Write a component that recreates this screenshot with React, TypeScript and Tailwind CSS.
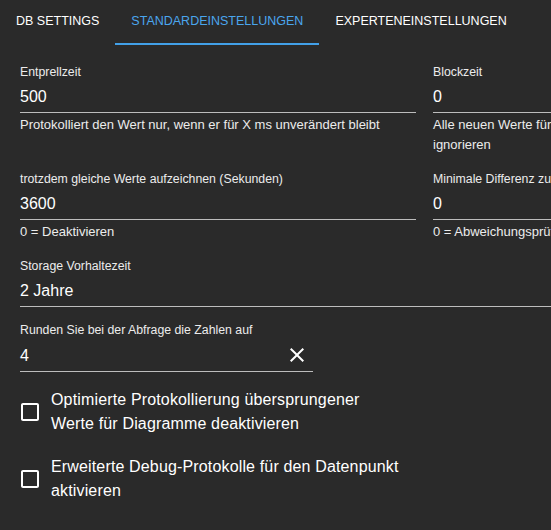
import React from 'react'

interface FieldProps {
  label: string
  value: string
  helper?: string
  className?: string
  endIcon?: React.ReactNode
}

function Field({ label, value, helper, className, endIcon }: FieldProps) {
  return (
    <div className={className}>
      <div className="text-[12.3px] leading-[16px] text-[#ececec] whitespace-nowrap">{label}</div>
      <div className="flex items-center pt-[5px] pb-[4px] border-b border-[#bdbdbd]">
        <span className="flex-1 text-[16px] leading-[23px] text-white whitespace-nowrap">{value}</span>
        {endIcon}
      </div>
      {helper && <div className="mt-[2px] text-[13px] leading-[20px] text-[#ececec]">{helper}</div>}
    </div>
  )
}

function CloseIcon() {
  return (
    <svg viewBox="0 0 24 24" className="w-6 h-6 mr-[4px] fill-white">
      <path d="M19 6.41 17.59 5 12 10.59 6.41 5 5 6.41 10.59 12 5 17.59 6.41 19 12 13.41 17.59 19 19 17.59 13.41 12z" />
    </svg>
  )
}

function CheckRow({ text }: { text: string }) {
  return (
    <label className="flex items-center -ml-[11px]">
      <span className="p-[9px]">
        <svg viewBox="0 0 24 24" className="w-6 h-6 fill-white">
          <path d="M19 5v14H5V5h14m0-2H5c-1.1 0-2 .9-2 2v14c0 1.1.9 2 2 2h14c1.1 0 2-.9 2-2V5c0-1.1-.9-2-2-2z" />
        </svg>
      </span>
      <span className="max-w-[354px] text-[16px] leading-[24px] tracking-[0.15px] text-white">{text}</span>
    </label>
  )
}

const tabs = ['DB SETTINGS', 'STANDARDEINSTELLUNGEN', 'EXPERTENEINSTELLUNGEN']

export default function App() {
  return (
    <div className="w-[551px] h-[530px] overflow-hidden bg-[#2a2a2a] font-['Liberation_Sans',Arial,sans-serif]">
      {/* Tabs */}
      <div className="flex h-[45px]">
        {tabs.map((t, i) => (
          <div
            key={t}
            className={
              i === 1
                ? 'flex items-center px-4 pb-[1px] border-b-2 border-[#42a0e8] text-[12.5px] text-[#4aa6ee] whitespace-nowrap'
                : 'flex items-center px-4 pb-[1px] border-b-2 border-transparent text-[12.5px] text-white whitespace-nowrap'
            }
          >
            {t}
          </div>
        ))}
      </div>

      {/* Settings form */}
      <div className="pl-5 pt-[19px]">
        <div className="grid grid-cols-[396px_396px] gap-x-[17px] gap-y-4 items-start">
          <Field label="Entprellzeit" value="500" helper="Protokolliert den Wert nur, wenn er für X ms unverändert bleibt" />
          <Field
            label="Blockzeit"
            value="0"
            helper="Alle neuen Werte für X ms nach dem letzten protokollierten Wert ignorieren"
          />
          <Field label="trotzdem gleiche Werte aufzeichnen (Sekunden)" value="3600" helper="0 = Deaktivieren" />
          <Field label="Minimale Differenz zum letzten Wert" value="0" helper="0 = Abweichungsprüfung deaktivieren" />
          <Field label="Storage Vorhaltezeit" value="2 Jahre" className="col-span-2" />
        </div>

        <Field
          label="Runden Sie bei der Abfrage die Zahlen auf"
          value="4"
          className="w-[293px] mt-[15px]"
          endIcon={<CloseIcon />}
        />

        <div className="flex flex-col gap-[19px] mt-4">
          <CheckRow text="Optimierte Protokollierung übersprungener Werte für Diagramme deaktivieren" />
          <CheckRow text="Erweiterte Debug-Protokolle für den Datenpunkt aktivieren" />
        </div>
      </div>
    </div>
  )
}
